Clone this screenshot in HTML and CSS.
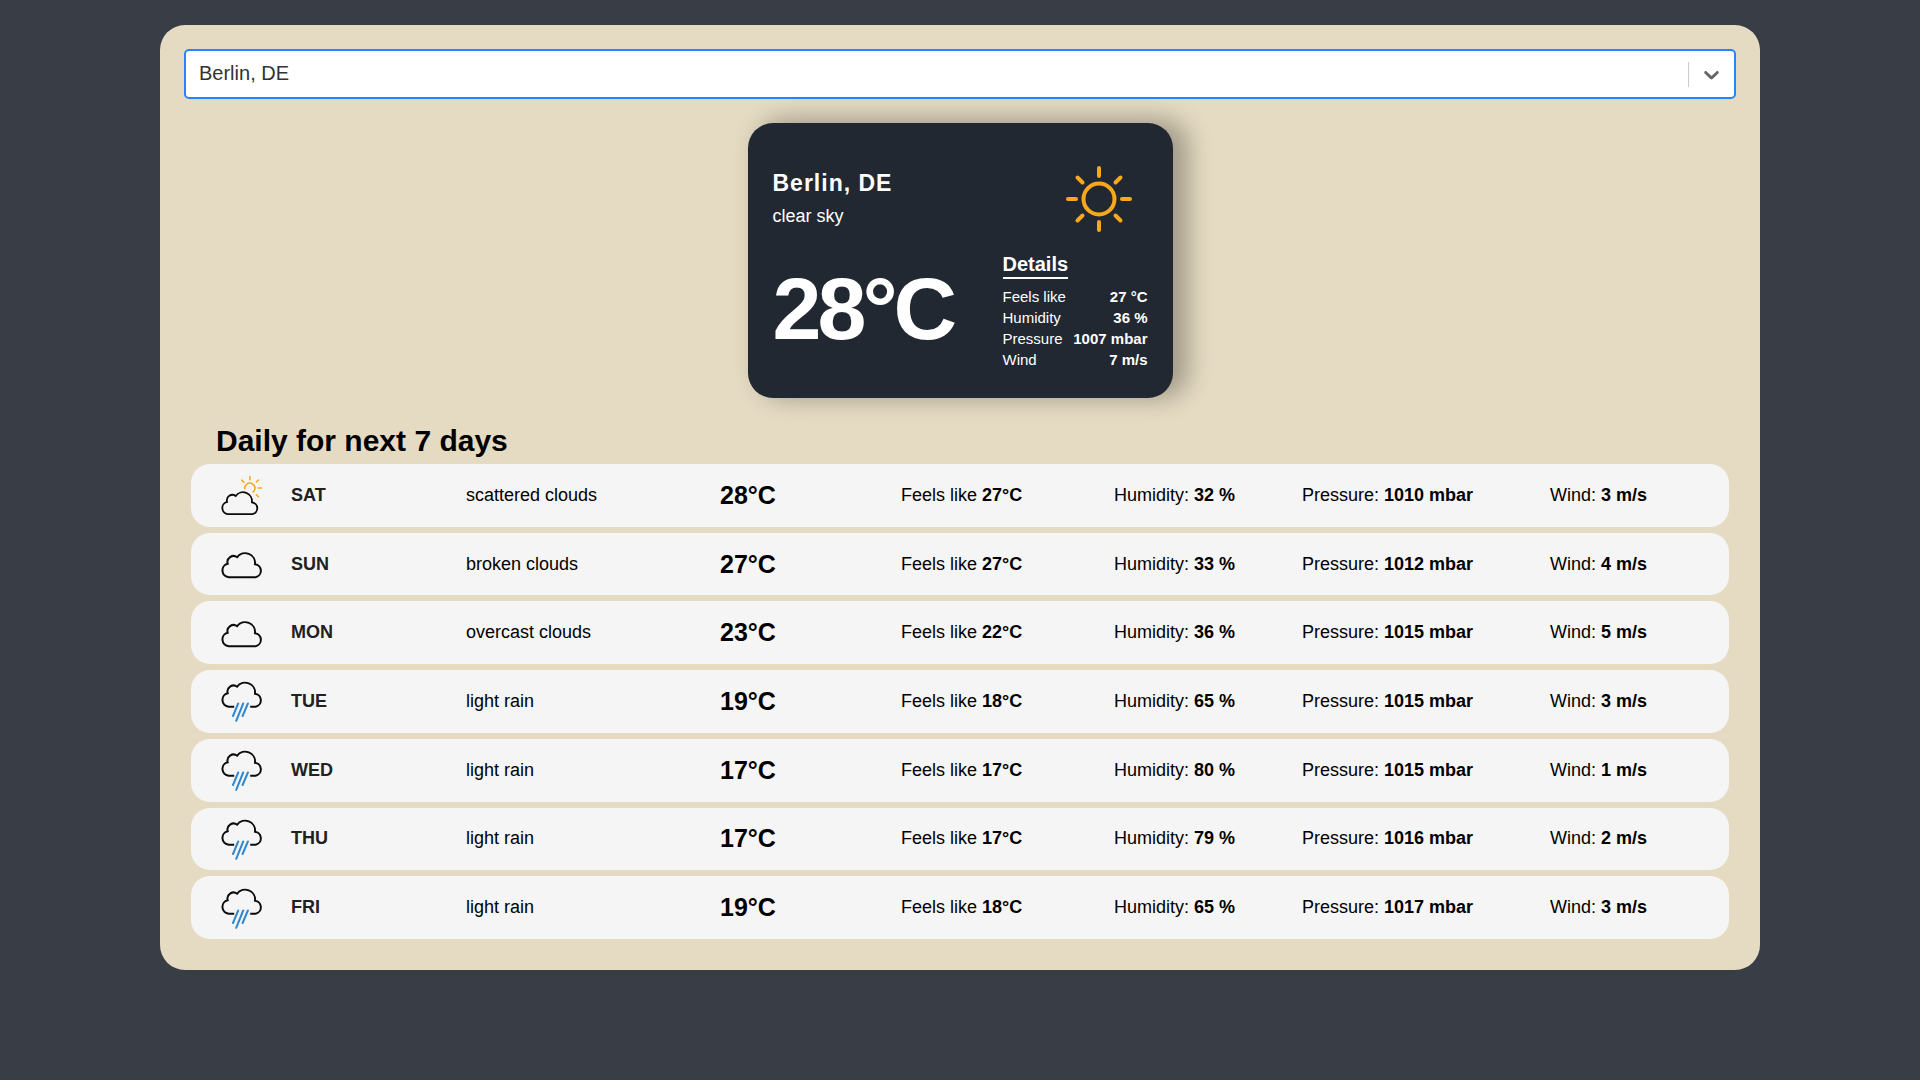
FILE: index.html
```html
<!DOCTYPE html>
<html lang="en">
<head>
<meta charset="utf-8">
<meta name="viewport" content="width=device-width, initial-scale=1">
<title>Weather</title>
<link rel="stylesheet" href="styles.css">
</head>
<body>
<svg class="sprite" aria-hidden="true">
  <defs>
    <path id="cloud-path" d="M7.7 34.2A6.8 6.8 0 0 1 6.7 20.8A6.1 6.1 0 0 1 16.2 14.2A9.9 9.9 0 0 1 34 21.2A6.6 6.6 0 0 1 34.7 34.2Z"/>
    <symbol id="icon-clouds" viewBox="0 0 42 42"><use href="#cloud-path"/></symbol>
    <symbol id="icon-scattered" viewBox="0 0 42 42">
      <path class="sun-line" d="M23.8 14.6A5.1 5.1 0 1 1 32.2 18M28.9 2.6V5.7M20.7 6.2L22.9 8.3M37.5 6L35.4 8M37.2 14H40.4M35.4 20.7L37.4 22.7"/>
      <use href="#cloud-path" transform="translate(0 9) scale(.91)"/>
    </symbol>
    <symbol id="icon-rain" viewBox="0 0 42 42">
      <path d="M13.2 26.7H7.7A6.8 6.8 0 0 1 6.7 13.3A6.1 6.1 0 0 1 16.2 6.7A9.9 9.9 0 0 1 34 13.7A6.6 6.6 0 0 1 34.7 26.7H29.2"/>
      <path class="rain-line" d="M17.2 23.5L12 36M22.2 23.5L15.2 40.8M26.9 23.5L21.6 36"/>
    </symbol>
  </defs>
</svg>
<main class="container">
  <div class="search">
    <select class="search-select" aria-label="City">
      <option>Berlin, DE</option>
    </select>
    <span class="search-indicator" aria-hidden="true">
      <svg class="chevron" viewBox="0 0 20 20"><path d="M4.516 7.548c0.436-0.446 1.043-0.481 1.576 0l3.908 3.747 3.908-3.747c0.533-0.481 1.141-0.446 1.574 0 0.436 0.445 0.408 1.197 0 1.615-0.406 0.418-4.695 4.502-4.695 4.502-0.217 0.223-0.502 0.335-0.787 0.335s-0.57-0.112-0.789-0.335c0 0-4.287-4.084-4.695-4.502s-0.436-1.17 0-1.615z"/></svg>
    </span>
  </div>

  <section class="weather">
    <div class="weather-top">
      <div class="place">
        <h1 class="city">Berlin, DE</h1>
        <p class="description">clear sky</p>
      </div>
      <svg class="weather-icon" viewBox="-49 -49 98 98" aria-hidden="true">
        <circle r="15.5"/>
        <path d="M0-31V-23M0 31V23M-31 0H-23M31 0H23M-21.5-21.5L-16.5-16.5M21.5-21.5L16.5-16.5M-21.5 21.5L-16.5 16.5M21.5 21.5L16.5 16.5"/>
      </svg>
    </div>
    <div class="weather-bottom">
      <p class="temperature">28°C</p>
      <div class="details">
        <h2 class="details-title">Details</h2>
        <dl class="parameters">
          <div class="parameter"><dt>Feels like</dt><dd>27 °C</dd></div>
          <div class="parameter"><dt>Humidity</dt><dd>36 %</dd></div>
          <div class="parameter"><dt>Pressure</dt><dd>1007 mbar</dd></div>
          <div class="parameter"><dt>Wind</dt><dd>7 m/s</dd></div>
        </dl>
      </div>
    </div>
  </section>

  <section class="forecast">
    <h2 class="forecast-title">Daily for next 7 days</h2>
    <ol class="days">
      <li class="day"><svg class="day-icon" aria-hidden="true"><use href="#icon-scattered"/></svg><b class="day-name">SAT</b><span>scattered clouds</span><b class="day-temp">28°C</b><span>Feels like <b>27°C</b></span><span>Humidity: <b>32 %</b></span><span>Pressure: <b>1010 mbar</b></span><span>Wind: <b>3 m/s</b></span></li>
      <li class="day"><svg class="day-icon" aria-hidden="true"><use href="#icon-clouds"/></svg><b class="day-name">SUN</b><span>broken clouds</span><b class="day-temp">27°C</b><span>Feels like <b>27°C</b></span><span>Humidity: <b>33 %</b></span><span>Pressure: <b>1012 mbar</b></span><span>Wind: <b>4 m/s</b></span></li>
      <li class="day"><svg class="day-icon" aria-hidden="true"><use href="#icon-clouds"/></svg><b class="day-name">MON</b><span>overcast clouds</span><b class="day-temp">23°C</b><span>Feels like <b>22°C</b></span><span>Humidity: <b>36 %</b></span><span>Pressure: <b>1015 mbar</b></span><span>Wind: <b>5 m/s</b></span></li>
      <li class="day"><svg class="day-icon" aria-hidden="true"><use href="#icon-rain"/></svg><b class="day-name">TUE</b><span>light rain</span><b class="day-temp">19°C</b><span>Feels like <b>18°C</b></span><span>Humidity: <b>65 %</b></span><span>Pressure: <b>1015 mbar</b></span><span>Wind: <b>3 m/s</b></span></li>
      <li class="day"><svg class="day-icon" aria-hidden="true"><use href="#icon-rain"/></svg><b class="day-name">WED</b><span>light rain</span><b class="day-temp">17°C</b><span>Feels like <b>17°C</b></span><span>Humidity: <b>80 %</b></span><span>Pressure: <b>1015 mbar</b></span><span>Wind: <b>1 m/s</b></span></li>
      <li class="day"><svg class="day-icon" aria-hidden="true"><use href="#icon-rain"/></svg><b class="day-name">THU</b><span>light rain</span><b class="day-temp">17°C</b><span>Feels like <b>17°C</b></span><span>Humidity: <b>79 %</b></span><span>Pressure: <b>1016 mbar</b></span><span>Wind: <b>2 m/s</b></span></li>
      <li class="day"><svg class="day-icon" aria-hidden="true"><use href="#icon-rain"/></svg><b class="day-name">FRI</b><span>light rain</span><b class="day-temp">19°C</b><span>Feels like <b>18°C</b></span><span>Humidity: <b>65 %</b></span><span>Pressure: <b>1017 mbar</b></span><span>Wind: <b>3 m/s</b></span></li>
    </ol>
  </section>
</main>
</body>
</html>
```
FILE: styles.css
```css
* { box-sizing: border-box; }

body {
  margin: 0;
  background: #393e46;
  color: #000;
  font-family: "Liberation Sans", Arial, sans-serif;
  font-size: 18px;
}

h1, h2, p, dl, dd, ol { margin: 0; padding: 0; }

.sprite { display: none; }

.container {
  max-width: 1600px;
  margin: 25px auto;
  padding: 24px 24px 31px;
  border-radius: 25px;
  background: #e5dbc3;
}

/* City selector */
.search { display: grid; }

.search-select,
.search-indicator { grid-area: 1 / 1; }

.search-select {
  appearance: none;
  width: 100%;
  height: 50px;
  padding: 0 60px 2px 13px;
  border: 2px solid #2684ff;
  border-radius: 5px;
  outline: none;
  background: #fff;
  color: #333;
  font-family: inherit;
  font-size: 20px;
}

.search-indicator {
  align-self: center;
  justify-self: end;
  display: flex;
  padding: 0 10px;
  margin-right: 2px;
  border-left: 1px solid #ccc;
  pointer-events: none;
}

.chevron { width: 25px; height: 25px; fill: #666; }

/* Current weather */
.weather {
  width: 425px;
  max-width: 100%;
  margin: 24px auto;
  padding: 27px 25px 28px;
  border-radius: 25px;
  background: #222831;
  box-shadow: 13px -2px 25px 2px rgb(0 0 0 / 30%);
  color: #fff;
}

.weather-top,
.weather-bottom {
  display: flex;
  justify-content: space-between;
}

.weather-top { align-items: center; margin-bottom: 4px; }

.place { padding-bottom: 2px; }

.city {
  font-size: 23px;
  line-height: 28px;
  letter-spacing: 1px;
}

.description { margin-top: 8px; line-height: 22px; }

.weather-icon {
  width: 98px;
  height: 98px;
  fill: none;
  stroke: #f8a81c;
  stroke-width: 4;
  stroke-linecap: round;
}

.temperature {
  font-size: 88px;
  font-weight: bold;
  line-height: 114px;
  letter-spacing: -4px;
}

.details { width: 145px; }

.details-title {
  width: max-content;
  margin-bottom: 7px;
  padding-bottom: 1px;
  border-bottom: 2px solid #fff;
  font-size: 20px;
  line-height: 24px;
}

.parameter {
  display: flex;
  justify-content: space-between;
  font-size: 15px;
  line-height: 21px;
}

.parameter dd { font-weight: bold; }

/* Daily forecast */
.forecast { padding: 0 7px; }

.forecast-title {
  margin-bottom: 5px;
  padding-left: 25px;
  font-size: 30px;
  line-height: 37px;
}

.days {
  display: grid;
  grid-auto-rows: 1fr;
  gap: 6px;
  min-height: 475px;
  list-style: none;
}

.day {
  display: grid;
  grid-template-columns: 70px 175fr 254fr 181fr 213fr 188fr 248fr 149fr;
  align-items: center;
  padding: 0 30px;
  border-radius: 19px;
  background: #f5f5f5;
}

.day-name { color: #212121; }

.day-temp { font-size: 25px; }

.day-icon {
  width: 42px;
  height: 42px;
  fill: none;
  stroke: #0b0c0b;
  stroke-width: 2;
}

.sun-line { stroke: #f8a81c; stroke-width: 1.6; stroke-linecap: round; }

.rain-line { stroke: #3089d0; stroke-linecap: round; }
```
